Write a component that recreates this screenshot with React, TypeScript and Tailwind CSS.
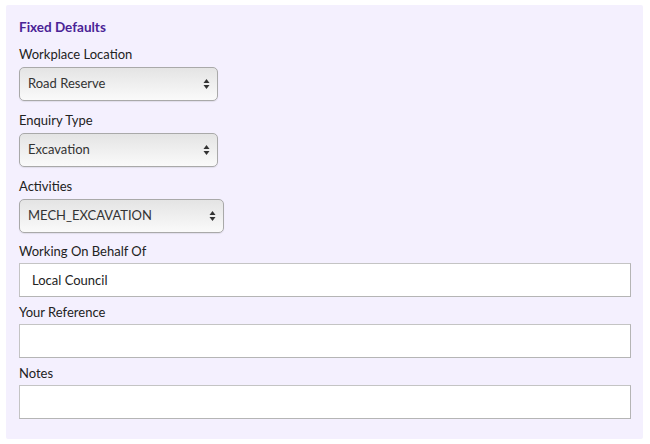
import React from "react";

const font = { fontFamily: "Lato, 'Noto Sans', sans-serif" };

const Arrows = () => (
  <svg
    className="pointer-events-none absolute right-[8px] top-1/2 -translate-y-1/2"
    width="7"
    height="11"
    viewBox="0 0 7 11"
  >
    <path d="M3.5 0.5 L6.5 4.5 H0.5 Z" fill="#333" />
    <path d="M3.5 10.5 L6.5 6.5 H0.5 Z" fill="#333" />
  </svg>
);

const SelectField = ({
  label,
  value,
  width,
}: {
  label: string;
  value: string;
  width: string;
}) => (
  <div className="mb-[9px]">
    <div className="h-5 mb-[3px] text-[13px] leading-5 text-[#222]">{label}</div>
    <div className={`relative ${width}`}>
      <select
        defaultValue={value}
        className="h-[34px] w-full appearance-none rounded-[5px] border border-[#a9a9a9] bg-gradient-to-b from-[#e4e4e4] to-[#fafafa] pl-[8px] text-[13px] text-[#333] shadow-[0_1px_1px_rgba(0,0,0,0.08)] outline-none"
        style={font}
      >
        <option>{value}</option>
      </select>
      <Arrows />
    </div>
  </div>
);

const TextField = ({ label, value }: { label: string; value?: string }) => (
  <div className="mb-[5px]">
    <div className="h-5 mb-[2px] text-[13px] leading-5 text-[#222]">{label}</div>
    <input
      readOnly
      value={value ?? ""}
      className="h-[34px] w-full border border-[#c4c4c4] border-r-[#b5b5b5] border-b-[#b5b5b5] bg-white px-[12px] text-[13px] text-[#222] outline-none"
      style={font}
    />
  </div>
);

export default function App() {
  return (
    <div className="h-[444px] w-[650px] bg-white pt-[5px] pl-[6px]" style={font}>
      <section className="w-[637px] h-[434px] rounded-[2px] bg-[#f4f0fe] pt-[14px] pl-[13px] pr-[12px]">
        <h3 className="mb-[9px] text-[13.5px] leading-4 font-bold text-[#4a2396]">
          Fixed Defaults
        </h3>
        <SelectField label="Workplace Location" value="Road Reserve" width="w-[199px]" />
        <SelectField label="Enquiry Type" value="Excavation" width="w-[199px]" />
        <SelectField label="Activities" value="MECH_EXCAVATION" width="w-[205px]" />
        <div className="-mt-[1px]">
          <TextField label="Working On Behalf Of" value="Local Council" />
          <TextField label="Your Reference" />
          <TextField label="Notes" />
        </div>
      </section>
    </div>
  );
}
